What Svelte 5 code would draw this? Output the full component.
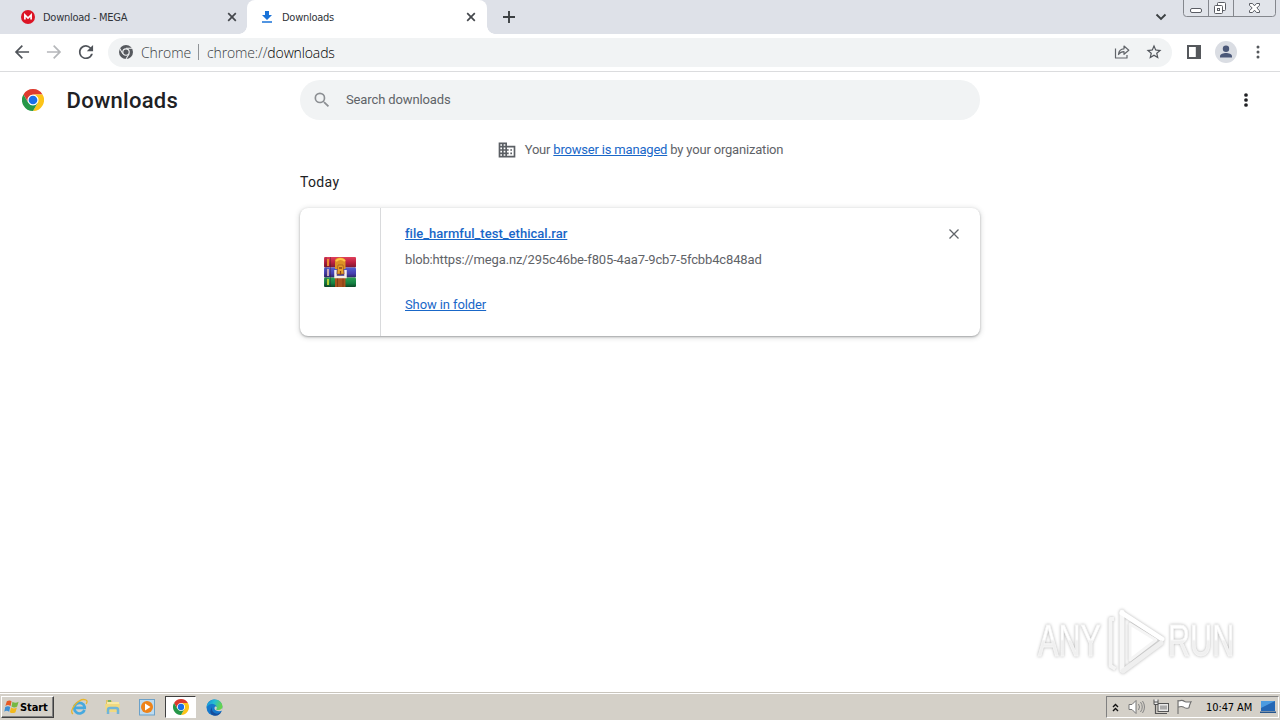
<script>
  const url = 'blob:https://mega.nz/295c46be-f805-4aa7-9cb7-5fcbb4c848ad';
</script>

{#snippet chromeLogo(size)}
  <svg width={size} height={size} viewBox="0 0 48 48">
    <circle cx="24" cy="24" r="13" fill="#fff" />
    <path fill="#dd3a2e" d="M24 12H44.78a23.99 23.99 0 0 0-41.56 0L13.6 30A11.99 11.99 0 0 1 24 12Z" />
    <path fill="#fcc419" d="M34.39 30L24 48A23.99 23.99 0 0 0 44.78 12H24A11.99 11.99 0 0 1 34.39 30Z" />
    <path fill="#269748" d="M13.61 30L3.22 12A23.99 23.99 0 0 0 24 48L34.39 30a11.99 11.99 0 0 1-20.78 0Z" />
    <circle cx="24" cy="24" r="9.5" fill="#1a6fe8" />
  </svg>
{/snippet}

<div class="screen">
  <div class="tabstrip">
    <div class="tab idle">
      <svg width="14" height="14" viewBox="0 0 14 14"><circle cx="7" cy="7" r="7" fill="#dc1425" /><path d="M3.9 9.5V5L7 8l3.100-3v4.500" fill="none" stroke="#fff" stroke-width="1.700" /></svg>
      <span class="tab-title mega">Download - MEGA</span>
      <svg class="close" width="10" height="10" viewBox="0 0 10 10"><path d="M1.200 1.200l7.600 7.600M8.800 1.200L1.200 8.800" stroke="#44474c" stroke-width="1.700" /></svg>
    </div>
    <div class="tab active">
      <svg width="14" height="14" viewBox="0 0 14 14"><path d="M5 1h4v4h3L7 10 2 5h3zM2 11.300h10v1.500H2z" fill="#1a73d8" /></svg>
      <span class="tab-title dl">Downloads</span>
      <svg class="close" width="10" height="10" viewBox="0 0 10 10"><path d="M1.200 1.200l7.600 7.600M8.800 1.200L1.200 8.800" stroke="#44474c" stroke-width="1.700" /></svg>
    </div>
    <svg class="plus" width="14" height="14" viewBox="0 0 14 14"><path d="M7 1v12M1 7h12" stroke="#3c4043" stroke-width="1.900" /></svg>
    <svg class="chev" width="12" height="8" viewBox="0 0 12 8"><path d="M1.500 1.500L6 6l4.500-4.500" fill="none" stroke="#3c4043" stroke-width="1.900" /></svg>
    <svg class="winctl" width="94" height="18" viewBox="0 0 94 18">
      <path d="M.5 0V13.500a3 3 0 0 0 3 3H89.500a3 3 0 0 0 3-3V0M25.500 0V16M50.500 0V16" fill="#e1e4ea" stroke="#84878d" />
      <rect x="7.500" y="8.500" width="11" height="4" rx="1.500" fill="#fff" stroke="#5a5d64" />
      <rect x="34.500" y="2.500" width="8" height="8" rx="1" fill="#fff" stroke="#5a5d64" />
      <rect x="31.500" y="5.500" width="8" height="8" rx="1" fill="#fff" stroke="#5a5d64" />
      <rect x="34.500" y="8.500" width="2" height="2" fill="#fff" stroke="#5a5d64" />
      <path d="M66.500 3.500h3l2 2.300 2-2.300h3v1.800l-2.700 2.700 2.700 2.700v1.800h-3l-2-2.300-2 2.300h-3v-1.800l2.700-2.700-2.700-2.700z" fill="#fff" stroke="#5a5d64" />
    </svg>
  </div>

  <div class="toolbar">
    <svg class="back" width="20" height="20" viewBox="0 0 24 24"><path fill="#50545a" d="M20.500 11H7.200l5.900-5.900L11.700 3.700 3.400 12l8.300 8.300 1.400-1.400L7.200 13h13.300z" /></svg>
    <svg class="fwd" width="20" height="20" viewBox="0 0 24 24"><path fill="#b5b7ba" d="M3.500 11h13.300l-5.900-5.900 1.400-1.400 8.300 8.300-8.300 8.300-1.400-1.400 5.900-5.900H3.500z" /></svg>
    <svg class="reload" width="20" height="20" viewBox="0 0 24 24"><path fill="#50545a" d="M17.650 6.350A7.960 7.960 0 0 0 12 3.500c-4.700 0-8.500 3.800-8.500 8.500s3.800 8.500 8.500 8.500c4 0 7.300-2.700 8.200-6.500H18a6.400 6.400 0 1 1-1.600-6.400L13 11h7.500V3.500z" /></svg>
    <div class="omnibox">
      <svg class="site" width="14" height="14" viewBox="0 0 48 48"><circle cx="24" cy="24" r="24" fill="#56595e" /><circle cx="24" cy="24" r="13" fill="#f1f3f4" /><path d="M24 11.500H46M13 30L2.500 12M35 30L24 48" stroke="#f1f3f4" stroke-width="3.500" /><circle cx="24" cy="24" r="9" fill="#56595e" /></svg>
      <span class="scheme-name">Chrome</span>
      <i class="divider"></i>
      <span class="address">chrome://<b>downloads</b></span>
      <svg class="share" width="16" height="16" viewBox="0 0 16 16"><path d="M1.500 4.500v9.500h11.500v-3M4.500 10.500c.3-3.700 2.300-5.600 5.500-5.700V2l4.800 4.200L10 10.300V7.700c-2.400 0-4.200.9-5.500 2.800z" fill="none" stroke="#62656a" stroke-width="1.200" stroke-linejoin="round" /></svg>
      <svg class="star" width="18" height="18" viewBox="0 0 24 24"><path fill="#50545a" d="M22 9.240l-7.190-.62L12 2 9.190 8.630 2 9.240l5.460 4.730L5.820 21 12 17.270 18.180 21l-1.630-7.030zM12 15.400l-3.760 2.270 1-4.280-3.320-2.880 4.380-.38L12 6.100l1.710 4.040 4.380.38-3.320 2.880 1 4.280z" /></svg>
    </div>
    <svg class="panel" width="14" height="14" viewBox="0 0 14 14"><path fill="#55585c" fill-rule="evenodd" d="M0 0h14v14H0zM2 2v10h6.800V2z" /></svg>
    <svg class="avatar" width="22" height="22" viewBox="0 0 22 22"><circle cx="11" cy="11" r="11" fill="#dadde3" /><circle cx="11" cy="7.800" r="3.200" fill="#4b5878" /><path d="M5 16.500v-1.300c0-2.200 3.500-3.300 6-3.300s6 1.100 6 3.300v1.300z" fill="#4b5878" /></svg>
    <svg class="menu" width="4" height="14" viewBox="0 0 4 14"><g fill="#55585c"><circle cx="2" cy="2" r="1.500" /><circle cx="2" cy="7" r="1.500" /><circle cx="2" cy="12" r="1.500" /></g></svg>
  </div>

  <main>
    <header>
      <div class="brand">{@render chromeLogo(22)}<h1>Downloads</h1></div>
      <div class="search">
        <svg width="20" height="20" viewBox="0 0 24 24"><path fill="#8c8f93" d="M15.500 14h-.79l-.28-.27A6.470 6.470 0 0 0 16 9.500 6.500 6.500 0 1 0 9.500 16c1.610 0 3.090-.59 4.230-1.570l.27.28v.79l5 4.990L20.490 19zm-6 0a4.500 4.500 0 1 1 0-9 4.500 4.500 0 0 1 0 9z" /></svg>
        <span>Search downloads</span>
      </div>
      <svg class="more" width="4" height="14" viewBox="0 0 4 14"><g fill="#202124"><circle cx="2" cy="2" r="1.850" /><circle cx="2" cy="7" r="1.850" /><circle cx="2" cy="12" r="1.850" /></g></svg>
    </header>
    <div class="managed">
      <svg width="20" height="20" viewBox="0 0 24 24"><path fill="#5b5f64" d="M12 7V3H2v18h20V7zM6 19H4v-2h2zm0-4H4v-2h2zm0-4H4V9h2zm0-4H4V5h2zm4 12H8v-2h2zm0-4H8v-2h2zm0-4H8V9h2zm0-4H8V5h2zm10 12h-8v-2h2v-2h-2v-2h2v-2h-2V9h8zm-2-8h-2v2h2zm0 4h-2v2h2z" /></svg>
      <span>Your <a href="#managed">browser is managed</a> by your organization</span>
    </div>
    <section>
      <h2>Today</h2>
      <article>
        <div class="thumb">
          <svg width="34" height="32" viewBox="0 0 34 32">
            <defs>
              <linearGradient id="red" x2="0" y2="1"><stop stop-color="#e0405a" /><stop offset=".5" stop-color="#bd2142" /><stop offset="1" stop-color="#7c1830" /></linearGradient>
              <linearGradient id="blue" x2="0" y2="1"><stop stop-color="#5261d2" /><stop offset=".6" stop-color="#473fb0" /><stop offset="1" stop-color="#2c2765" /></linearGradient>
              <linearGradient id="green" x2="0" y2="1"><stop stop-color="#2ba052" /><stop offset=".6" stop-color="#158243" /><stop offset="1" stop-color="#0c4726" /></linearGradient>
            </defs>
            <rect x="1" y="1" width="32" height="10.500" rx="1" fill="url(#red)" />
            <rect x="1" y="11.500" width="32" height="10" rx="1" fill="url(#blue)" />
            <rect x="1" y="21.500" width="32" height="9.500" rx="1" fill="url(#green)" />
            <path d="M3 1v30M7.500 1v30" stroke="#321522" stroke-opacity=".35" />
            <path d="M5 3v7" stroke="#ee8b32" stroke-width="2" /><path d="M5 13v7" stroke="#c9a9b9" stroke-width="2" /><path d="M5 23v6" stroke="#b5cf35" stroke-width="2" />
            <path d="M12 21h10.500v10H12z" fill="#a9531f" /><path d="M14.500 22v9M20 22v9" stroke="#7c3913" stroke-width=".8" />
            <path d="M12 4q1-2.500 5-2.500T22.500 4v9H12z" fill="#dc9226" /><path d="M13 5q4.500-4 9 0" fill="none" stroke="#ffc544" stroke-width="2" />
            <path d="M12.500 14v7h10v-7" fill="none" stroke="#f7eee8" stroke-width="2.500" />
            <path d="M15 9h5l1 9h-7z" fill="#e9a12c" stroke="#9c541a" stroke-width=".7" /><path d="M16 12h3M17.500 15v4" stroke="#8a431a" stroke-width="1.300" />
          </svg>
        </div>
        <div class="details">
          <a class="file" href="#file">file_harmful_test_ethical.rar</a>
          <span class="source">{url}</span>
          <a class="folder" href="#folder">Show in folder</a>
        </div>
        <svg class="remove" width="12" height="12" viewBox="0 0 12 12"><path d="M1.500 1.500l9 9M10.500 1.500l-9 9" stroke="#606469" stroke-width="1.300" /></svg>
      </article>
    </section>
  </main>

  <div class="watermark">
    <svg width="220" height="80" viewBox="0 0 220 80">
      <defs><linearGradient id="fade" x2="0" y2="1"><stop offset=".48" stop-color="#fff" /><stop offset=".52" stop-color="#f0f0f0" /></linearGradient></defs>
      <g class="mark">
        <path d="M84 16h-3.500v47l5 3" fill="none" stroke="#f5f5f5" stroke-width="4" stroke-linejoin="round" />
        <path d="M92 9v58" fill="none" stroke="#f7f7f7" stroke-width="5" stroke-linecap="round" />
        <path d="M92 10l40 26" fill="none" stroke="#fff" stroke-width="5" stroke-linecap="round" />
        <path d="M93 68l38-28" fill="none" stroke="#efefef" stroke-width="5" stroke-linecap="round" />
        <path d="M100 21l26 16-26 20z" fill="#fff" stroke="#f5f5f5" stroke-width="3" stroke-linejoin="round" />
      </g>
      <g class="mark letters">
        <text x="8" y="53">ANY</text>
        <text x="138" y="53">RUN</text>
      </g>
    </svg>
  </div>

  <footer>
    <div class="start">
      <svg width="16" height="16" viewBox="0 0 17 16"><path d="M3 2q3-2 5 0L7 7Q4 5 1.500 7z" fill="#e65a25" /><path d="M9 2.500q3 2 6.500 0L14 7.500q-3 2-6 0z" fill="#75b843" /><path d="M1.300 8q3-1.700 5.300 0L5.500 13q-3-2-5.200 0z" fill="#3c8ed4" /><path d="M7.500 8.500q3 2 6.200 0l-1.500 5q-3 2-6 0z" fill="#f2b91d" /></svg>
      <span>Start</span>
    </div>
    <svg class="ie" width="18" height="18" viewBox="0 0 18 18"><path d="M14.500 12A5.300 5.300 0 1 1 14.700 9v.8H5" fill="none" stroke="#46a9df" stroke-width="2.700" /><path d="M3 16C-2 13 9-1 16 2q2 1 .2 4" fill="none" stroke="#e8b62c" stroke-width="1.300" /></svg>
    <svg class="explorer" width="18" height="18" viewBox="0 0 18 18"><path d="M2 2h5l1.500 2H15v10H2z" fill="#dfc468" /><path d="M3 4h12v9H3z" fill="#f8e9a5" /><path d="M1 6h15l-1 8H2z" fill="#f1d980" /><path d="M4 16v-4q0-2 2-2h6q2 0 2 2v4" fill="none" stroke="#70b5d8" stroke-width="2.500" /><path d="M4 3h3" stroke="#59ae64" stroke-width="1.500" /></svg>
    <svg class="media" width="17" height="17" viewBox="0 0 17 17"><rect x=".5" y=".5" width="15" height="15.500" fill="#bddbf0" stroke="#6ba1c9" /><circle cx="8" cy="8" r="6" fill="#ee8319" /><path d="M6 4.500v7L11.500 8z" fill="#fff" /></svg>
    <div class="running">{@render chromeLogo(16)}</div>
    <svg class="edge" width="17" height="17" viewBox="0 0 17 17">
      <defs><linearGradient id="edgeTop" x2="1" y2=".4"><stop stop-color="#1689d8" /><stop offset=".5" stop-color="#25bdd4" /><stop offset="1" stop-color="#66d34d" /></linearGradient></defs>
      <circle cx="8.500" cy="8.500" r="8" fill="#1578cc" />
      <path d="M6 8q-1 5 4 6.500 3 .7 5.500-2-2 5-8 4Q2 14 6 8z" fill="#174e9c" />
      <path d="M9 7.500q-1.500 2.500 1 4 3 1.500 6.500 0V8z" fill="#d4d0c8" />
      <path d="M.5 8C1 3 5 .5 8.500.5c5 0 8 3.500 8 7 0 3-3.500 4.500-6.500 3q1.500-2 0-4Q5.500 2.500.5 8z" fill="url(#edgeTop)" />
    </svg>
    <div class="tray">
      <svg class="up" width="7" height="9" viewBox="0 0 7 9"><path d="M1 4l2.500-2.500L6 4M1 8l2.500-2.500L6 8" fill="none" stroke="#111" stroke-width="1.400" /></svg>
      <svg class="sound" width="17" height="16" viewBox="0 0 17 16"><path d="M1 5.500h3L8 1.500v13l-4-4H1z" fill="#fff" stroke="#777" /><path d="M10.500 5q2 3 0 6M12.500 3q3.500 5 0 10M14.500 2q4 6 0 12" fill="none" stroke="#858585" /></svg>
      <svg class="net" width="17" height="16" viewBox="0 0 17 16"><rect x="5" y="4.500" width="10.500" height="8" fill="#e8e8e8" stroke="#555" /><path d="M7 6.500h7v4H7z" fill="#aaa" /><path d="M8 14.500h6M2.500 6v8.500h6" fill="none" stroke="#555" stroke-width="1.200" /><path d="M1 .5v5h4v-5M1 3h4" fill="#eee" stroke="#555" /></svg>
      <svg class="flag" width="17" height="16" viewBox="0 0 17 16"><path d="M2 1v14M2.500 2q4-1.500 6 .5 2.500 1 6.500.2-1.500 3-2 6-3.500 1.500-5.500-.7-2-1-5 0" fill="#fff" stroke="#707070" stroke-width="1.100" /></svg>
      <span class="time">10:47 AM</span>
      <svg class="desktop" width="16" height="14" viewBox="0 0 16 14"><path d="M1 1h14v10H1z" fill="#2467b5" /><path d="M1 1h14L1 8z" fill="#4c9be0" /><path d="M0 11.500h16v1.500H0z" fill="#25558d" /></svg>
    </div>
  </footer>
</div>

<style>
  :global(body) { margin: 0; background: #fff; }
  * { box-sizing: border-box; }
  svg { display: block; flex: none; }
  span, h1, h2 { white-space: nowrap; }
  .screen { position: relative; width: 1280px; height: 720px; overflow: hidden; display: flex; flex-direction: column; background: #fff; font-family: Roboto, sans-serif; }
  .tabstrip { height: 34px; background: #dee1e8; display: flex; align-items: center; flex: none; }
  .tab { height: 34px; display: flex; align-items: center; font: 11px "DejaVu Sans Condensed", "DejaVu Sans", sans-serif; font-stretch: condensed; color: #303338; }
  .idle { width: 247px; padding: 0 10px 0 21px; background: #dee1e8; }
  .active { width: 240px; padding: 0 11px 0 13px; background: #fff; border-radius: 8px 8px 0 0; position: relative; }
  .active::before, .active::after { content: ""; position: absolute; bottom: 0; width: 8px; height: 8px; }
  .active::before { left: -8px; background: radial-gradient(circle at 0 0, transparent 7.5px, #fff 8px); }
  .active::after { right: -8px; background: radial-gradient(circle at 100% 0, transparent 7.5px, #fff 8px); }
  .tab-title { margin-left: 8px; }
  .mega { letter-spacing: -.27px; }
  .dl { letter-spacing: -.27px; }
  .close { margin-left: auto; }
  .plus { margin-left: 15px; }
  .chev { margin-left: auto; }
  .winctl { margin-left: 16px; margin-right: 3px; align-self: flex-start; }
  .toolbar { height: 38px; display: flex; align-items: center; flex: none; padding-bottom: 1px; border-bottom: 1px solid #dbdcde; }
  .back { margin-left: 12px; }
  .fwd, .reload { margin-left: 12px; }
  .omnibox { width: 1064px; height: 29px; margin-left: 12px; padding: 0 9px 0 11px; border-radius: 15px; background: #f1f3f4; display: flex; align-items: center; font: 14px "Open Sans", sans-serif; font-weight: 300; color: #3a3e43; }
  .scheme-name { margin-left: 8px; width: 50px; letter-spacing: -.1px; }
  .divider { width: 1px; height: 16px; margin: 0 8px 0 7px; background: #909397; }
  .address { letter-spacing: -.13px; }
  .address b { font-weight: 300; color: #000; }
  .share { margin-left: auto; }
  .star { margin-left: 15px; }
  .panel { margin-left: 15px; }
  .avatar { margin-left: 14px; }
  .menu { margin-left: 19px; }
  main { flex: 1; min-height: 0; }
  header { height: 56px; display: flex; align-items: center; }
  .brand { width: 300px; padding-left: 22px; display: flex; align-items: center; }
  h1 { margin: 2px 0 0 22.500px; font-size: 22px; font-weight: 500; line-height: 28px; letter-spacing: .27px; color: #202124; }
  .search { width: 680px; height: 40px; border-radius: 20px; background: #f1f3f4; padding-left: 12px; display: flex; align-items: center; color: #5f6368; font-size: 13px; letter-spacing: -.12px; }
  .search span { margin-left: 14px; padding-bottom: 2px; }
  .more { margin-left: 264px; }
  .managed { height: 44px; display: flex; align-items: center; justify-content: center; font-size: 13px; letter-spacing: -.19px; gap: 8px; color: #5f6368; }
  .managed span { padding-bottom: 2px; }
  a { color: #1967c8; text-decoration: underline; }
  section { width: 680px; margin: 0 auto; }
  h2 { margin: 0 0 16px; height: 20px; font-size: 14px; line-height: 20px; font-weight: 400; letter-spacing: .35px; color: #202124; }
  article { height: 128px; display: flex; border-radius: 8px; box-shadow: 0 1px 2px rgba(60,64,67,.38), 0 1px 5px 1px rgba(60,64,67,.18); }
  .thumb { width: 81px; border-right: 1px solid #d9dadc; display: flex; align-items: center; justify-content: center; }
  .details { width: 560px; padding: 16px 0 0 24px; display: flex; flex-direction: column; align-items: flex-start; font-size: 13px; line-height: 20px; }
  .file { font-weight: 500; letter-spacing: .02px; }
  .source { margin-top: 6px; color: #5f6368; letter-spacing: -.145px; }
  .folder { margin-top: 25px; letter-spacing: -.1px; }
  .remove { margin: 20px 0 0 7px; }
  .watermark { position: absolute; left: 1030px; top: 603px; }
  .mark { filter: drop-shadow(0 0 1.500px rgba(0,0,0,.3)); }
  .letters text { font: 400 45px "Liberation Sans", sans-serif; fill: url(#fade); stroke: #f7f7f7; stroke-width: .8px; }
  .letters text { transform-box: fill-box; transform: scaleX(.68); }
  footer { height: 28px; flex: none; background: #d4d0c8; border-top: 1px solid #c9c5bd; box-shadow: inset 0 1px #fff; display: flex; align-items: center; padding-top: 1px; }
  .start { width: 53px; height: 22px; margin-left: 1px; padding-left: 2px; display: flex; align-items: center; border: 1px solid; border-color: #fff #404040 #404040 #fff; box-shadow: inset -1px -1px #808080; font: bold 11px "DejaVu Sans Condensed", "DejaVu Sans", sans-serif; font-stretch: condensed; color: #000; }
  .start span { letter-spacing: -.1px; }
  .ie { margin-left: 16px; }
  .explorer { margin-left: 16px; }
  .media { margin-left: 17px; }
  .running { width: 31px; height: 22px; margin-left: 9px; border: 1px solid; border-color: #404040 #fff #fff #404040; background: #fff; display: flex; align-items: center; justify-content: center; }
  .edge { margin-left: 10px; }
  .tray { width: 173px; height: 22px; margin-left: auto; margin-right: 1px; padding-left: 5px; display: flex; align-items: center; border: 1px solid; border-color: #808080 #fff #fff #808080; font: 11px "DejaVu Sans Condensed", "DejaVu Sans", sans-serif; font-stretch: condensed; color: #000; }
  .sound { margin-left: 9px; }
  .net { margin-left: 8px; }
  .flag { margin-left: 6px; }
  .time { margin-left: 13px; width: 47px; letter-spacing: -.1px; }
  .desktop { margin-left: 7px; }
</style>
